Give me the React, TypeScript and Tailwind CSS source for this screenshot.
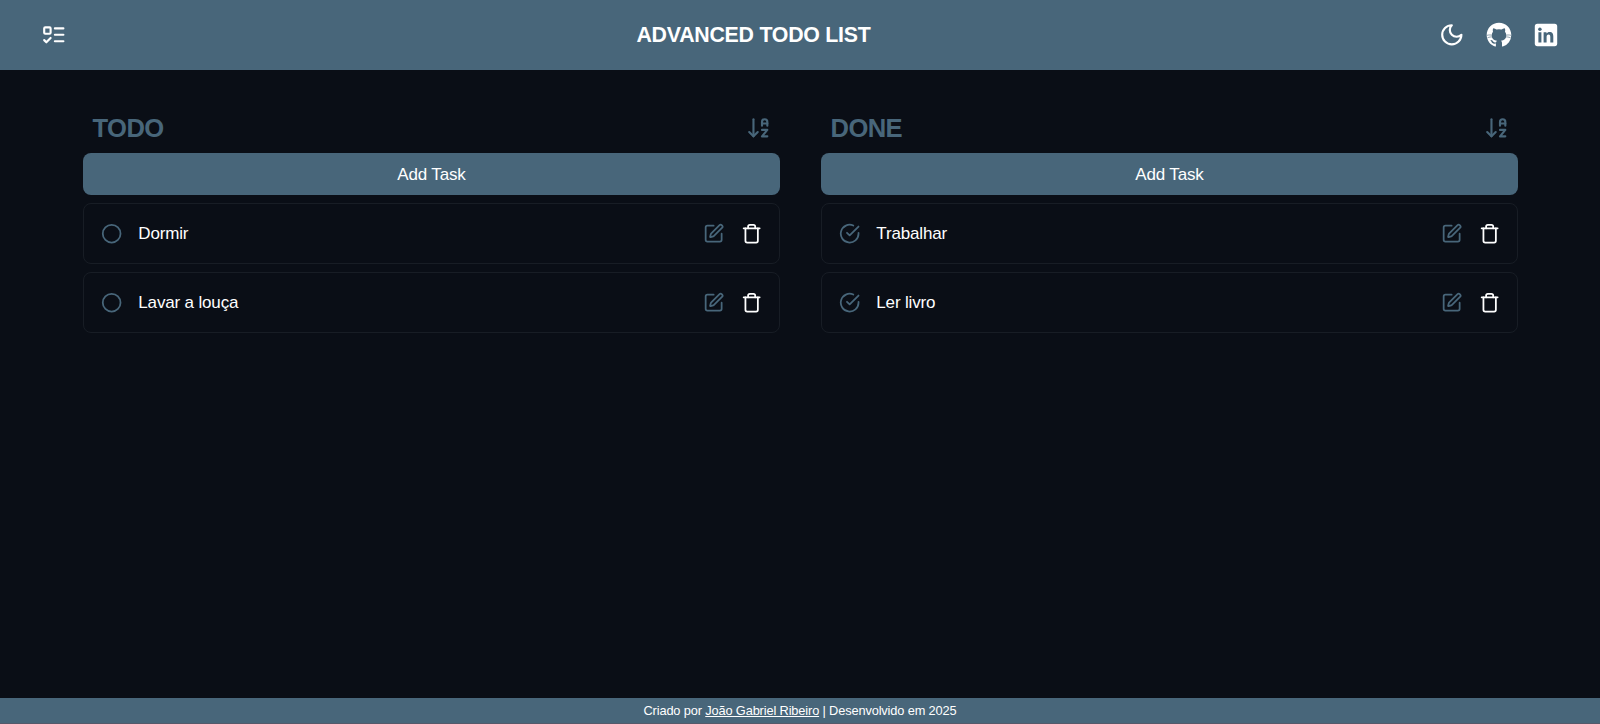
import type { ReactNode } from "react";
import { ArrowDownAZ, Circle, SquarePen } from "lucide-react";

type Task = { title: string; done: boolean };

function StrokeIcon({ className, children }: { className: string; children: ReactNode }) {
  return (
    <svg className={className} viewBox="0 0 24 24" fill="none" stroke="currentColor" strokeWidth="2" strokeLinecap="round" strokeLinejoin="round">
      {children}
    </svg>
  );
}

function ListIcon() {
  return (
    <StrokeIcon className="size-[25.6px]">
      <rect x="3" y="5" width="6" height="6" rx="1" />
      <path d="m3 17 2 2 4-4" />
      <path d="M13 6h8" />
      <path d="M13 12h8" />
      <path d="M13 18h8" />
    </StrokeIcon>
  );
}

function MoonIcon() {
  return (
    <StrokeIcon className="size-[25.6px]">
      <path d="M12 3a6 6 0 0 0 9 9 9 9 0 1 1-9-9Z" />
    </StrokeIcon>
  );
}

function GithubIcon() {
  return (
    <svg className="h-[26px] w-[26px]" viewBox="0 0 26 26">
      <path
        fill="currentColor"
        d="M13 .8C6.2.8.7 6.2.7 13c0 5.4 3.5 10 8.400 11.600.5.1.8-.3.8-.7v-2.400c-3.200.6-4-.8-4.300-1.500-.4-.8-.9-1.500-1.400-1.900 1.700-.5 2.500.7 3.200 1.700.6.8 1.700.9 2.700.5.1-.7.5-1.300.9-1.600-3-.4-5.200-1.700-5.200-5.500 0-1.400.4-2.500 1.200-3.400-.3-1-.3-2.500.2-3.600 1.300 0 2.500.8 3.400 1.400a11 11 0 0 1 4.800 0c.9-.6 2.100-1.400 3.400-1.400.5 1.100.5 2.600.2 3.600.8.9 1.200 2 1.200 3.400 0 3.800-2.200 5.100-5.200 5.500.6.5 1 1.400 1 2.600v2.600c0 .4.3.8.8.7A12.300 12.300 0 0 0 25.300 13C25.300 6.200 19.800.8 13 .8Z"
      />
      <path className="stroke-[#48667a]" fill="none" strokeWidth=".6" d="M1 13.300c2-.5 3.800-.4 5.600 0M1.500 15.800c2-.9 3.700-1 5.400-.8M25 13.300c-2-.5-3.800-.4-5.600 0M24.500 15.800c-2-.9-3.700-1-5.400-.8" />
    </svg>
  );
}

function LinkedinIcon() {
  return (
    <svg className="h-[26px] w-[26px]" viewBox="0 0 26 26">
      <rect x="1.800" y="1.800" width="22.400" height="22.400" rx="2.600" fill="currentColor" />
      <g className="fill-[#48667a]">
        <circle cx="6.900" cy="7.300" r="1.750" />
        <path d="M5.400 10.200h3v10.200h-3zM10.600 10.200h2.900v1.400c.6-1 1.700-1.650 3.100-1.650 2.900 0 3.700 1.800 3.700 4.500v5.950h-3v-5.300c0-1.500-.3-2.600-1.700-2.600-1.500 0-2 1.100-2 2.600v5.300h-3z" />
      </g>
    </svg>
  );
}

function TrashIcon() {
  return (
    <StrokeIcon className="size-[21.3px] text-white">
      <path d="M3 6h18" />
      <path d="M19 6v14c0 1-1 2-2 2H7c-1 0-2-1-2-2V6" />
      <path d="M8 6V4c0-1 1-2 2-2h4c1 0 2 1 2 2v2" />
    </StrokeIcon>
  );
}

function CheckedIcon() {
  return (
    <StrokeIcon className="size-[21.3px]">
      <path d="M22 11.080V12a10 10 0 1 1-5.930-9.140" />
      <path d="m9 11 3 3L22 4" />
    </StrokeIcon>
  );
}

function TaskRow({ task }: { task: Task }) {
  return (
    <li className="flex h-[61px] items-center rounded-[8px] border border-[#181d25] pr-[17px] pl-[16.5px]">
      <button className="text-[#48667a]">
        {task.done ? <CheckedIcon /> : <Circle className="size-[21.3px]" />}
      </button>
      <span className="ml-[16.5px] flex-1 text-[17px] leading-6 tracking-[-0.16px] text-white">{task.title}</span>
      <button className="mr-[16.5px] text-[#48667a]">
        <SquarePen className="size-[21.3px]" />
      </button>
      <button>
        <TrashIcon />
      </button>
    </li>
  );
}

function Column({ title, tasks }: { title: string; tasks: Task[] }) {
  return (
    <section className="flex-1">
      <div className="flex h-[39px] items-center justify-between pr-[8px] pl-[9.5px]">
        <h2 className="text-[25.6px] leading-8 font-bold tracking-[-0.6px] text-[#48667a]">{title}</h2>
        <button className="text-[#48667a]">
          <ArrowDownAZ className="size-[25.6px]" />
        </button>
      </div>
      <button className="mt-[6px] h-[42px] w-full rounded-[8px] bg-[#48667a] pt-px text-[17px] tracking-[-0.15px] text-white">
        Add Task
      </button>
      <ul className="mt-2 flex flex-col gap-2">
        {tasks.map((task) => (
          <TaskRow key={task.title} task={task} />
        ))}
      </ul>
    </section>
  );
}

export default function App() {
  return (
    <div className="flex h-[724px] flex-col bg-[#0a0e16] font-['Liberation_Sans',Arial,sans-serif]">
      <header className="flex h-[70px] items-center justify-between bg-[#48667a] px-[41px] text-white">
        <ListIcon />
        <h1 className="pt-px pl-px text-[21.33px] font-bold tracking-[-0.25px]">ADVANCED TODO LIST</h1>
        <div className="flex items-center gap-[21px]">
          <MoonIcon />
          <GithubIcon />
          <LinkedinIcon />
        </div>
      </header>
      <main className="flex flex-1 gap-[41px] pt-[38px] pr-[82px] pl-[83px]">
        <Column
          title="TODO"
          tasks={[
            { title: "Dormir", done: false },
            { title: "Lavar a louça", done: false },
          ]}
        />
        <Column
          title="DONE"
          tasks={[
            { title: "Trabalhar", done: true },
            { title: "Ler livro", done: true },
          ]}
        />
      </main>
      <footer className="h-[26px] border-b border-[#55596a] bg-[#48667a] text-center text-[12.8px] leading-[26px] tracking-[-0.14px] text-white">
        Criado por <a className="underline">João Gabriel Ribeiro</a> | Desenvolvido em 2025
      </footer>
    </div>
  );
}
